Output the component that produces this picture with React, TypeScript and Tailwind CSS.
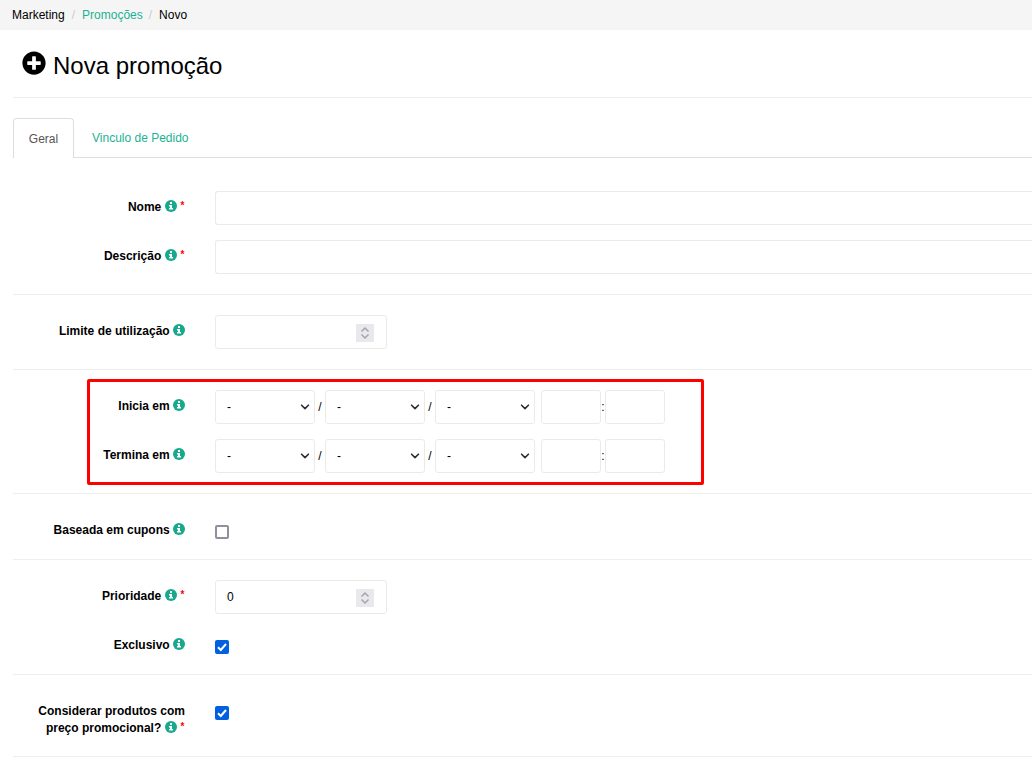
import { ReactNode } from "react"
import { FaPlusCircle } from "react-icons/fa"

function InfoIcon() {
  return (
    <svg className="relative top-[-2px] inline-block align-middle" width="12" height="12" viewBox="0 0 12 12">
      <circle cx="6" cy="6" r="6" fill="#17a98d" />
      <rect x="5" y="2" width="2" height="2" fill="#ffffff" />
      <path d="M4 5h3v3h1v1.5H4V8h1V6.500H4z" fill="#ffffff" />
    </svg>
  )
}

function Spinner() {
  return (
    <span className="absolute right-[12px] top-[8px] flex h-[18px] w-[18px] flex-col items-center justify-center bg-[#e9e9ed]">
      <svg width="10" height="7" viewBox="0 0 10 7" fill="none" stroke="#a3a3ad" strokeWidth="1.5">
        <path d="M1.5 5.5 5 2l3.5 3.5" />
      </svg>
      <svg width="10" height="7" viewBox="0 0 10 7" fill="none" stroke="#a3a3ad" strokeWidth="1.5">
        <path d="M1.5 1.5 5 5l3.5-3.5" />
      </svg>
    </span>
  )
}

function NumberBox({ value }: { value?: string }) {
  return (
    <div className="relative flex h-[34px] w-[172px] items-center rounded-[3px] border border-[#ebebe6] pl-[11px] text-[12px] text-black">
      {value}
      <Spinner />
    </div>
  )
}

function TextBox() {
  return <div className="h-[34px] flex-1 rounded-l-[3px] border border-r-0 border-[#ebebe6]" />
}

function SelectBox() {
  return (
    <div className="relative flex h-[34px] w-[100px] items-center rounded-[3px] border border-[#ebebe6] pl-[11px] text-[12px] text-black">
      -
      <svg className="absolute right-[4px] top-[12px]" width="10" height="8" viewBox="0 0 10 8" fill="none" stroke="#2b2f33" strokeWidth="1.6" strokeLinecap="round" strokeLinejoin="round">
        <path d="m1.6 2.200 3.400 3.400 3.400-3.400" />
      </svg>
    </div>
  )
}

function TimeBox() {
  return <div className="h-[34px] w-[60px] rounded-[3px] border border-[#ebebe6]" />
}

function DateFields() {
  return (
    <div className="flex items-center text-[12px] text-black">
      <SelectBox />
      <span className="w-[10px] text-center">/</span>
      <SelectBox />
      <span className="w-[10px] text-center">/</span>
      <SelectBox />
      <div className="ml-[6px]">
        <TimeBox />
      </div>
      <span className="w-[4px] text-center">:</span>
      <TimeBox />
    </div>
  )
}

function CheckBox({ checked }: { checked?: boolean }) {
  if (checked) {
    return (
      <span className="flex h-[14px] w-[14px] items-center justify-center rounded-[2px] bg-[#0060df]">
        <svg width="10" height="10" viewBox="0 0 10 10" fill="none" stroke="#ffffff" strokeWidth="2">
          <path d="M1 5.200 3.800 8 9 2" />
        </svg>
      </span>
    )
  }
  return <span className="block h-[14px] w-[14px] rounded-[2px] border-2 border-[#8f8f9d]" />
}

function Label({ children, required }: { children: ReactNode; required?: boolean }) {
  return (
    <div className="w-[172px] shrink-0 pt-[8px] text-right text-[12px] leading-[17px] font-bold text-black">
      {children}{" "}
      <InfoIcon />
      {required && <sup className="top-[-2px] ml-[4px] mr-[0.5px] text-[10px] font-bold text-[#ff0000]">*</sup>}
    </div>
  )
}

function Row({ label, required, children }: { label: ReactNode; required?: boolean; children: ReactNode }) {
  return (
    <div className="flex">
      <Label required={required}>{label}</Label>
      <div className="ml-[30px] flex-1">{children}</div>
    </div>
  )
}

function CheckRow({ label, required, checked }: { label: ReactNode; required?: boolean; checked?: boolean }) {
  return (
    <Row label={label} required={required}>
      <div className="pt-[11px]">
        <CheckBox checked={checked} />
      </div>
    </Row>
  )
}

export default function App() {
  return (
    <div className="relative h-[764px] w-[1032px] overflow-hidden bg-white font-['Liberation_Sans',Arial,sans-serif]">
      <div className="flex h-[30px] items-center bg-[#f5f5f5] pl-[12px] text-[12px]">
        <span className="text-black">Marketing</span>
        <span className="px-[7px] text-[#ccc]">/</span>
        <span className="text-[#1ab394]">Promoções</span>
        <span className="px-[6px] text-[#ccc]">/</span>
        <span className="ml-[1px] text-black">Novo</span>
      </div>

      <div className="ml-[13px]">
        <div className="flex h-[68px] items-center gap-[7px] border-b border-[#eeeeee] pt-[4px] pl-[9px]">
          <FaPlusCircle className="mb-[6px] h-[24px] w-[24px] text-black" />
          <h1 className="text-[24px] leading-[30px] text-black">Nova promoção</h1>
        </div>

        <div className="mt-[20px] flex h-[40px] border-b border-[#dddddd] text-[12px]">
          <div className="-mb-px flex w-[61px] items-center justify-center rounded-t-[4px] border border-b-0 border-[#dddddd] bg-white text-[#555555]">
            Geral
          </div>
          <div className="-mb-px flex items-center pl-[18px] text-[#1ab394]">Vinculo de Pedido</div>
        </div>

        <div className="flex flex-col gap-[15px] border-b border-[#eeeeee] pt-[33px] pb-[20px]">
          <Row label="Nome" required>
            <div className="flex"><TextBox /></div>
          </Row>
          <Row label="Descrição" required>
            <div className="flex"><TextBox /></div>
          </Row>
        </div>

        <div className="border-b border-[#eeeeee] py-[20px]">
          <Row label="Limite de utilização">
            <NumberBox />
          </Row>
        </div>

        <div className="flex flex-col gap-[15px] border-b border-[#eeeeee] pt-[20px] pb-[20px]">
          <Row label="Inicia em">
            <DateFields />
          </Row>
          <Row label="Termina em">
            <DateFields />
          </Row>
        </div>

        <div className="border-b border-[#eeeeee] py-[20px]">
          <CheckRow label="Baseada em cupons" />
        </div>

        <div className="flex flex-col gap-[15px] border-b border-[#eeeeee] py-[20px]">
          <Row label="Prioridade" required>
            <NumberBox value="0" />
          </Row>
          <CheckRow label="Exclusivo" checked />
        </div>

        <div className="border-b border-[#eeeeee] pt-[20px] pb-[19px]">
          <CheckRow
            label={
              <>
                Considerar produtos com
                <br />
                preço promocional?
              </>
            }
            required
            checked
          />
        </div>
      </div>

      {/* destaque vermelho sobre os campos de data */}
      <div className="absolute top-[379px] left-[87px] h-[106px] w-[617px] rounded-[2px] border-[3px] border-[#ff0000]" />
    </div>
  )
}
